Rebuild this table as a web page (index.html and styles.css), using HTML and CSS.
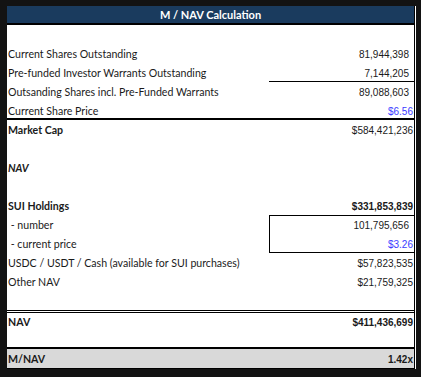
FILE: index.html
```
<!DOCTYPE html>
<html lang="en">
<head>
    <meta charset="UTF-8">
    <meta name="viewport" content="width=device-width, initial-scale=1.0">
    <title>M / NAV Calculation</title>
    <link rel="stylesheet" href="styles.css">
</head>
<body>

<div class="sheet">
    <div class="title">M / NAV Calculation</div>

    <div class="row"></div>
    <div class="row">
        <span class="label">Current Shares Outstanding</span>
        <span class="val gap">81,944,398</span>
    </div>
    <div class="row">
        <span class="label">Pre-funded Investor Warrants Outstanding</span>
        <span class="val gap underline">7,144,205</span>
    </div>
    <div class="row">
        <span class="label">Outsanding Shares incl. Pre-Funded Warrants</span>
        <span class="val gap">89,088,603</span>
    </div>
    <div class="row thick-bottom">
        <span class="label">Current Share Price</span>
        <span class="val input">$6.56</span>
    </div>
    <div class="row">
        <span class="label bold">Market Cap</span>
        <span class="val">$584,421,236</span>
    </div>

    <div class="row"></div>
    <div class="row">
        <span class="label bold italic">NAV</span>
        <span class="val"></span>
    </div>
    <div class="row"></div>

    <div class="row">
        <span class="label bold">SUI Holdings</span>
        <span class="val bold">$331,853,839</span>
    </div>
    <div class="row">
        <span class="label">&nbsp;- number</span>
        <span class="val gap box-top">101,795,656</span>
    </div>
    <div class="row">
        <span class="label">&nbsp;- current price</span>
        <span class="val input box-bottom">$3.26</span>
    </div>
    <div class="row">
        <span class="label">USDC / USDT / Cash (available for SUI purchases)</span>
        <span class="val">$57,823,535</span>
    </div>
    <div class="row">
        <span class="label">Other NAV</span>
        <span class="val">$21,759,325</span>
    </div>
    <div class="row"></div>

    <div class="row double-top">
        <span class="label bold">NAV</span>
        <span class="val bold">$411,436,699</span>
    </div>
    <div class="row short"></div>

    <div class="row total">
        <span class="label bold">M/NAV</span>
        <span class="val bold">1.42x</span>
    </div>
</div>

</body>
</html>
```

FILE: styles.css
```
body {
    margin: 0;
    padding: 6px 0 0 7px;
    background-color: #131313;
    font-family: 'Lato', 'Noto Sans', sans-serif;
    font-size: 10.6px;
    color: #1a1a1a;
}

.sheet {
    box-sizing: border-box;
    width: 408px;
    background-color: white;
    border-right: 1px solid #000;
    box-shadow: 1px 0 0 #fff;
}

.title {
    height: 17px;
    line-height: 17px;
    background-color: #1a3b5e;
    color: white;
    text-align: center;
    font-weight: bold;
    font-size: 11px;
    border-bottom: 2px solid #000;
}

/* each line of the sheet: label on the left, figure in the last column */
.row {
    box-sizing: border-box;
    display: grid;
    grid-template-columns: 262px 145px;
    height: 19px;
}

.row.short {
    height: 16px;
}

.label,
.val {
    box-sizing: border-box;
    display: flex;
    align-items: flex-end;
    padding-bottom: 3px;
    white-space: nowrap;
}

.label {
    padding-left: 1px;
}

.val {
    justify-content: flex-end;
    padding-right: 1px;
    font-family: 'Liberation Sans', Arial, sans-serif;
    font-size: 10px;
}

/* room kept for a closing bracket, like the spreadsheet number format */
.val.gap {
    padding-right: 5px;
}

.input {
    color: #3b3bff;
}

.bold {
    font-weight: bold;
}

.italic {
    font-style: italic;
}

.underline {
    border-bottom: 1px solid #000;
    padding-bottom: 2px;
}

.thick-bottom {
    border-bottom: 2px solid #000;
}

.thick-bottom .label,
.thick-bottom .val {
    padding-bottom: 1px;
}

.box-top {
    border-top: 1px solid #000;
    border-left: 1px solid #000;
}

.box-bottom {
    border-bottom: 1px solid #000;
    border-left: 1px solid #000;
    padding-bottom: 2px;
}

.double-top {
    border-top: 3px double #000;
    height: 21px;
}

.total {
    background-color: #d9d9d9;
    border-top: 2px solid #000;
    border-bottom: 1px solid #000;
    box-shadow: 0 1px 0 #fff;
    height: 22px;
}
```
